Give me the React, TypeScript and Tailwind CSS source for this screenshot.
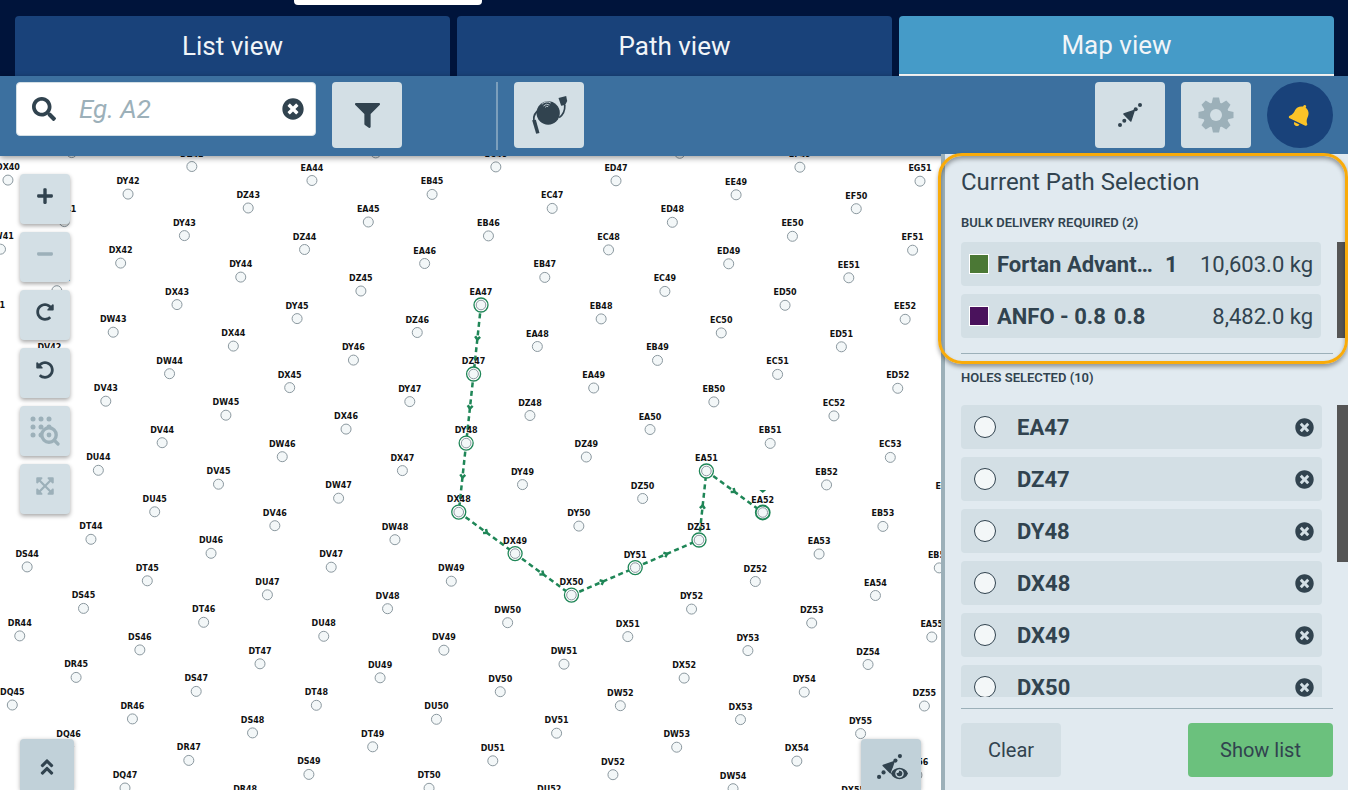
import { useState } from "react"
import {
  FaAngleDoubleUp,
  FaBell,
  FaExpandArrowsAlt,
  FaEye,
  FaFilter,
  FaMinus,
  FaPlus,
  FaRedoAlt,
  FaSearch,
  FaTimesCircle,
  FaUndoAlt,
} from "react-icons/fa"

type Hole = {
  id: string
  x: number
  y: number
}

const rows = [
  "EH", "EG", "EF", "EE", "ED", "EC", "EB", "EA", "DZ",
  "DY", "DX", "DW", "DV", "DU", "DT", "DS", "DR", "DQ",
]

/* EA47 is the origin of the staggered drill pattern */
const origin = { row: 7, number: 47, x: 481, y: 149 }

function locate(row: number, number: number) {
  const k = row - origin.row
  const pair = Math.floor(k / 2)
  const odd = k - pair * 2
  const n = number - origin.number
  return {
    x: origin.x + n * 56.35 - pair * 71.2 - odd * 7.4,
    y: origin.y + n * 41.5 + pair * 96.6 + odd * 69,
  }
}

const holes: Hole[] = rows.flatMap((name, row) =>
  Array.from({ length: 24 }, (_, i) => ({ id: `${name}${36 + i}`, ...locate(row, 36 + i) }))
).filter((h) => h.x > -12 && h.x < 955 && h.y > -6 && h.y < 650)

const pathIds = ["EA47", "DZ47", "DY48", "DX48", "DX49", "DX50", "DY51", "DZ51", "EA51", "EA52"]
const pathHoles = pathIds.map((id) => holes.find((h) => h.id === id) as Hole)

const products = [
  { name: "Fortan Advantage", density: "1", weight: "10,603.0 kg", swatch: "bg-[#4b7835]" },
  { name: "ANFO - 0.8", density: "0.8", weight: "8,482.0 kg", swatch: "bg-[#4a125c]" },
]

const tabs = ["List view", "Path view", "Map view"]

function PathIcon({ size }: { size: number }) {
  return (
    <svg width={size} height={size} viewBox="0 0 24 24" fill="currentColor">
      <circle cx="2" cy="22" r="2" />
      <circle cx="6.3" cy="17.7" r="2" />
      <circle cx="17.7" cy="6.3" r="2" />
      <circle cx="22" cy="2" r="2" />
      <path d="M5.9 11 16.3 7.4 12.8 18Z" stroke="currentColor" strokeWidth="1.4" strokeLinejoin="round" />
    </svg>
  )
}

function CableIcon() {
  return (
    <svg width="37" height="40" viewBox="0 0 110 120" fill="currentColor">
      <circle cx="51" cy="54" r="35" />
      <path d="M82 9 105 3 108 18 102 30 90 32Z" />
      <path d="M3 76 14 74 25 114 15 116Z" />
      <path d="M101 30Q102 55 84 68M27 43Q5 55 8 77" fill="none" stroke="currentColor" strokeWidth="5" />
      <g fill="none" stroke="#d3dfe5" strokeWidth="2.5">
        <path d="M32 28Q44 16 59 24" />
        <path d="M37 33Q45 24 55 30" />
        <path d="M42 37Q46 32 51 35" />
      </g>
    </svg>
  )
}

function GearIcon() {
  return (
    <svg width="36" height="36" viewBox="-18 -18 36 36" fill="currentColor">
      {[0, 45, 90, 135].map((angle) => (
        <path
          key={angle}
          d="M-3 -17.5H3L4.5 -11V11L3 17.5H-3L-4.5 11V-11Z"
          transform={`rotate(${angle})`}
        />
      ))}
      <circle r="12.8" />
      <circle r="6" fill="#d3dfe5" />
    </svg>
  )
}

function AreaZoomIcon() {
  return (
    <svg className="mt-1.5" width="30" height="31" viewBox="0 0 30 31" fill="currentColor">
      {[3, 11, 19].map((x) =>
        [3, 11, 19].map((y) => <circle key={`${x}-${y}`} cx={x} cy={y} r="2.5" />)
      )}
      <circle cx="19" cy="19" r="7.2" fill="#d3dfe5" stroke="currentColor" strokeWidth="3.4" />
      <circle cx="19" cy="19" r="2.4" />
      <path d="M24.5 24.5 28 28" stroke="currentColor" strokeWidth="3.2" strokeLinecap="round" />
    </svg>
  )
}

function HoleMap() {
  const last = pathHoles[pathHoles.length - 1]

  return (
    <svg className="absolute inset-0 h-full w-full" role="img" aria-label="Hole map">
      {holes.map((h) => (
        <circle key={h.id} cx={h.x} cy={h.y} r="5" fill="#f3f7f8" stroke="#8b989f" />
      ))}

      {/* Selected path */}
      {pathHoles.slice(1).map((to, i) => {
        const from = pathHoles[i]
        const angle = (Math.atan2(to.y - from.y, to.x - from.x) * 180) / Math.PI
        const mid = `translate(${(from.x + to.x) / 2} ${(from.y + to.y) / 2}) rotate(${angle})`
        return (
          <g key={to.id} stroke="#1f8657" strokeWidth="2.5" fill="none">
            <line x1={from.x} y1={from.y} x2={to.x} y2={to.y} strokeDasharray="5 3.5" />
            <path d="M-3 -2.5 0 0 -3 2.5" transform={mid} />
          </g>
        )
      })}
      {pathHoles.map((h) => (
        <g key={h.id}>
          <circle cx={h.x} cy={h.y} r="7" fill="#fff" stroke="#1f8657" strokeWidth={h === last ? 1.8 : 1.3} />
          <circle cx={h.x} cy={h.y} r="4.8" fill="#f3f7f8" stroke="#8b989f" />
        </g>
      ))}
      <path d={`M${last.x - 3.5} ${last.y - 22.5}h7l-3.5 3z`} fill="#1f8657" />

      <g className="font-['DejaVu_Sans',sans-serif] text-[8px] font-bold" fill="#111" textAnchor="middle">
        {holes.map((h) => (
          <text key={h.id} x={h.x} y={h.y - 10}>{h.id}</text>
        ))}
      </g>
    </svg>
  )
}

export default function App() {
  const [activeTab, setActiveTab] = useState("Map view")
  const [search, setSearch] = useState("")
  const [current, setCurrent] = useState("")

  const toolButton = "flex h-[66px] w-[70px] items-center justify-center rounded bg-[#d3dfe5]"
  const mapButton = "flex h-[50px] w-[50px] items-center justify-center rounded bg-[#d3dfe5] pb-1.5 shadow-[0_2px_4px_rgba(0,0,0,0.35)]"
  const cornerButton = "absolute bottom-0 flex h-[51px] items-center justify-center rounded-t bg-[#c1d1d9] shadow-[0_1px_4px_rgba(0,0,0,0.3)]"

  return (
    <div className="relative flex h-screen flex-col overflow-hidden bg-white font-[Roboto,sans-serif] text-[#31434f]">
      <header className="bg-[#00143b]">
        <div className="h-4">
          <div className="ml-[294px] h-[5px] w-[188px] rounded-b bg-white" />
        </div>
        <nav className="grid grid-cols-3 gap-[7px] pl-[15px] pr-[14px]">
          {tabs.map((tab) => (
            <button
              key={tab}
              onClick={() => setActiveTab(tab)}
              className={`h-[60px] rounded-t text-[26px] text-[#f1f5f8] ${
                tab === activeTab ? "border-b-2 border-white bg-[#459bc8]" : "bg-[#19427a]"
              }`}
            >
              {tab}
            </button>
          ))}
        </nav>
      </header>

      {/* Toolbar */}
      <div className="relative z-10 flex h-20 shrink-0 items-start bg-[#3c709f] pl-4 pr-[15px] pt-[6px] shadow-[0_2px_6px_rgba(0,0,0,0.4)]">
        <label className="flex h-[54px] w-[300px] items-center rounded border border-[#d3dfe5] bg-white pl-[15px] pr-[11px]">
          <FaSearch size={24} />
          <input
            value={search}
            onChange={(e) => setSearch(e.target.value)}
            placeholder="Eg. A2"
            aria-label="Search holes"
            className="ml-[23px] min-w-0 flex-1 text-[26px] outline-none placeholder:italic placeholder:text-[#9cb0b9]"
          />
          <button aria-label="Clear search" onClick={() => setSearch("")}>
            <FaTimesCircle size={22} />
          </button>
        </label>
        <button className={`${toolButton} ml-4`} aria-label="Filter">
          <FaFilter size={25} />
        </button>
        <div className="ml-[94px] h-[68px] w-[2px] bg-[#7c9fbc]" />
        <button className={`${toolButton} ml-4`} aria-label="Cable">
          <CableIcon />
        </button>
        <div className="ml-auto flex gap-4">
          <button className={toolButton} aria-label="Path">
            <PathIcon size={24} />
          </button>
          <button className={`${toolButton} text-[#9cb0b9]`} aria-label="Settings">
            <GearIcon />
          </button>
          <button
            className="flex h-[66px] w-[66px] items-center justify-center rounded-full bg-[#19427a] text-[#fbc327]"
            aria-label="Notifications"
          >
            <FaBell size={23} className="rotate-[25deg]" />
          </button>
        </div>
      </div>

      <div className="flex min-h-0 flex-1">
        <main className="relative min-w-0 flex-1 overflow-hidden">
          <HoleMap />
          <div className="absolute left-5 top-[18px] flex flex-col gap-2">
            <button className={mapButton} aria-label="Zoom in"><FaPlus size={18} /></button>
            <button className={`${mapButton} text-[#9cb0b9]`} aria-label="Zoom out"><FaMinus size={18} /></button>
            <button className={mapButton} aria-label="Rotate right"><FaRedoAlt size={18} /></button>
            <button className={mapButton} aria-label="Rotate left"><FaUndoAlt size={18} /></button>
            <button className={`${mapButton} text-[#9cb0b9]`} aria-label="Zoom to area"><AreaZoomIcon /></button>
            <button className={`${mapButton} text-[#9cb0b9]`} aria-label="Fit to screen"><FaExpandArrowsAlt size={20} /></button>
          </div>
          <button className={`${cornerButton} left-5 w-[54px] pt-1`} aria-label="Expand">
            <FaAngleDoubleUp size={20} />
          </button>
          <button className={`${cornerButton} right-5 w-[60px] pr-1 pt-1`} aria-label="Show path">
            <span className="relative">
              <PathIcon size={25} />
              <FaEye size={17} className="absolute -bottom-[3px] -right-1.5 rounded-full bg-[#c1d1d9]" />
            </span>
          </button>
        </main>

        {/* Path selection */}
        <aside className="relative z-20 -mt-[2px] flex w-[407px] shrink-0 flex-col border-l-4 border-[#9cb0b9] bg-[#e1eaf0] pl-4">
          <h2 className="mt-3 text-2xl">Current Path Selection</h2>
          <h3 className="mt-[15px] text-[13px] font-semibold leading-5">BULK DELIVERY REQUIRED (2)</h3>
          <div className="mt-[9px] flex">
            <ul className="flex flex-1 flex-col gap-2">
              {products.map((p) => (
                <li key={p.name} className="flex h-11 items-center gap-2 rounded bg-[#d3dfe5] px-2 text-[22px]">
                  <span className={`h-5 w-5 border border-white ${p.swatch}`} />
                  <b className="max-w-[160px] truncate">{p.name}</b>
                  <b>{p.density}</b>
                  <span className="ml-auto">{p.weight}</span>
                </li>
              ))}
            </ul>
            <div className="ml-4 w-[11px] bg-[#555]" />
          </div>
          <hr className="mr-[15px] mt-[15px] border-[#9cb0b9]" />
          <h3 className="mt-[14px] text-[13px] font-semibold leading-5">HOLES SELECTED (10)</h3>
          <div className="mt-[17px] flex min-h-0 flex-1">
            <ul className="flex flex-1 flex-col gap-2 overflow-hidden">
              {pathIds.map((id) => (
                <li key={id} className="flex h-11 shrink-0 items-center rounded bg-[#d3dfe5] pl-[13px] pr-2 text-[22px] font-bold">
                  <input
                    type="radio"
                    name="hole"
                    id={id}
                    checked={current === id}
                    onChange={() => setCurrent(id)}
                    className="h-[22px] w-[22px] appearance-none rounded-full border border-[#31434f] bg-[#f3f7f8]"
                  />
                  <label htmlFor={id} className="ml-[21px]">{id}</label>
                  <button className="ml-auto" aria-label={`Remove ${id}`}>
                    <FaTimesCircle size={19} />
                  </button>
                </li>
              ))}
            </ul>
            <div className="ml-[15px] h-[157px] w-[11px] bg-[#555]" />
          </div>
          <div className="mr-[15px] mt-[11px] flex justify-between border-t border-[#9cb0b9] pb-[13px] pt-[14px] text-xl">
            <button className="h-[54px] w-[100px] rounded bg-[#d3dfe5]">Clear</button>
            <button className="h-[54px] w-[145px] rounded bg-[#6bc17d]">Show list</button>
          </div>

          {/* Highlight frame */}
          <div className="pointer-events-none absolute -left-[7px] -top-px h-[211px] w-[410px] rounded-[24px] border-3 border-[#f9ab0a] shadow-[0_3px_4px_rgba(0,0,0,0.35),inset_0_3px_4px_rgba(0,0,0,0.35)]" />
        </aside>
      </div>
    </div>
  )
}
